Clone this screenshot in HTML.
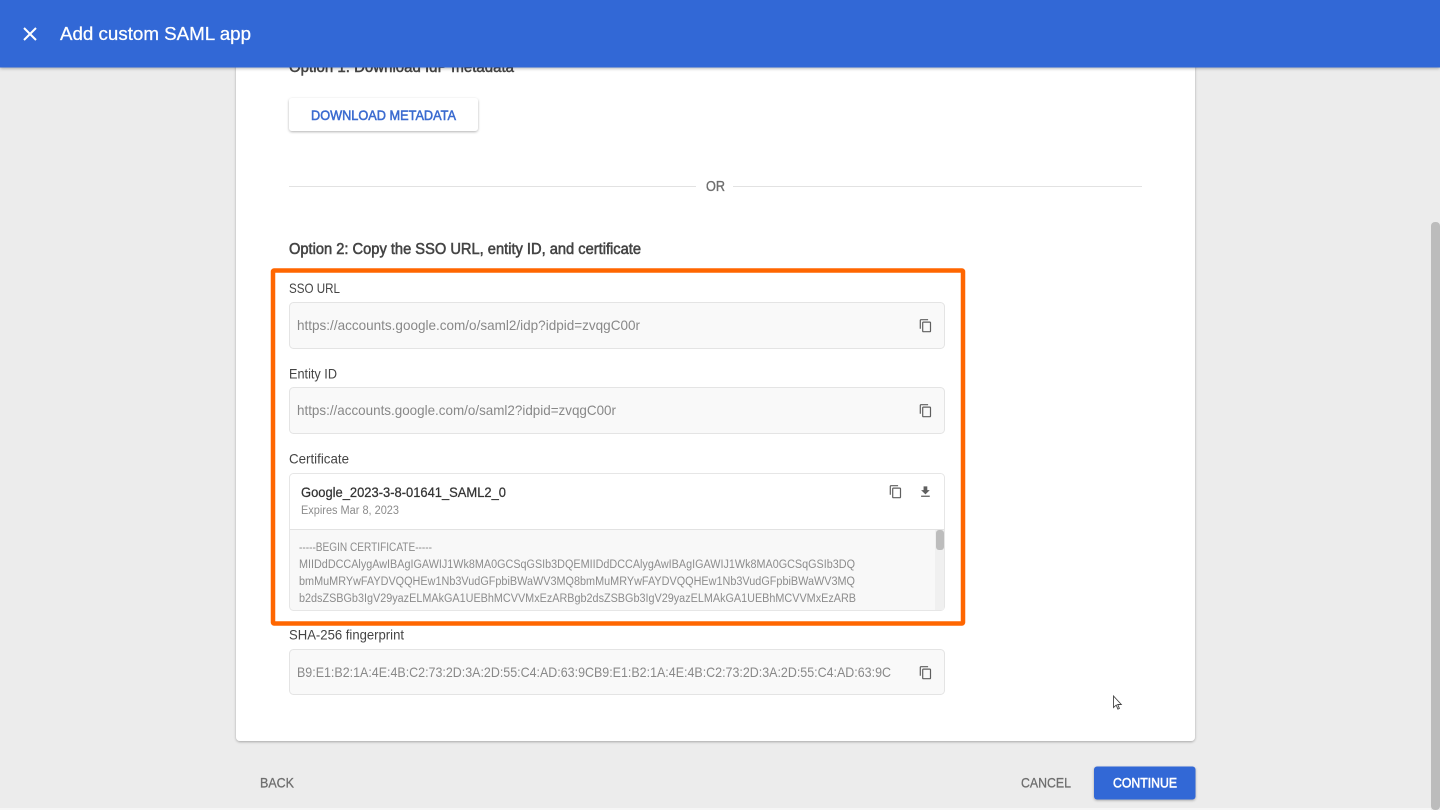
<!DOCTYPE html>
<html>
<head>
<meta charset="utf-8">
<style>
html,body{margin:0;padding:0;width:1440px;height:810px;overflow:hidden;background:#ececec}
svg{display:block;filter:blur(.3px)}
text{font-family:"Liberation Sans",sans-serif}
</style>
</head>
<body>
<svg width="1440" height="810" viewBox="0 0 1440 810" xmlns="http://www.w3.org/2000/svg">
<defs>
<filter id="hs" x="-5%" y="-30%" width="110%" height="170%"><feDropShadow dx="0" dy="1" stdDeviation="1.5" flood-color="#000" flood-opacity=".3"/></filter>
<filter id="bs" x="-10%" y="-20%" width="120%" height="150%"><feDropShadow dx="0" dy="1" stdDeviation="1.2" flood-color="#000" flood-opacity=".3"/></filter>
<path id="copy" d="M16 1H4c-1.1 0-2 .9-2 2v14h2V3h12V1zm3 4H8c-1.1 0-2 .9-2 2v14c0 1.1.9 2 2 2h11c1.1 0 2-.9 2-2V7c0-1.1-.9-2-2-2zm0 16H8V7h11v14z"/>
</defs>
<rect width="1440" height="810" fill="#ececec"/>
<rect x="0" y="808" width="1431" height="2" fill="#f6f6f6"/>
<rect x="1431" y="222" width="9" height="588" rx="4" fill="#bcbcbc"/>

<!-- card -->
<rect x="236" y="40" width="959" height="701" rx="4" fill="#fff" filter="url(#bs)"/>
<text x="289" y="72" font-size="15.500" fill="#444" stroke="#444" stroke-width=".5" textLength="225" lengthAdjust="spacingAndGlyphs">Option 1: Download IdP metadata</text>

<!-- download button -->
<rect x="289" y="98" width="189" height="33" rx="3" fill="#fff" filter="url(#bs)"/>
<text x="311" y="120" font-size="14" fill="#3b6bd0" stroke="#3b6bd0" stroke-width=".55" textLength="145" lengthAdjust="spacingAndGlyphs">DOWNLOAD METADATA</text>

<!-- OR -->
<rect x="289" y="186" width="407" height="1" fill="#e2e2e2"/>
<rect x="733" y="186" width="409" height="1" fill="#e2e2e2"/>
<text x="706" y="191" font-size="14.500" fill="#6e6e6e" stroke="#6e6e6e" stroke-width=".35" textLength="19" lengthAdjust="spacingAndGlyphs">OR</text>

<text x="289" y="254" font-size="15.500" fill="#444" stroke="#444" stroke-width=".55" textLength="352" lengthAdjust="spacingAndGlyphs">Option 2: Copy the SSO URL, entity ID, and certificate</text>

<!-- SSO URL -->
<text x="289" y="293" font-size="14" fill="#444" textLength="51" lengthAdjust="spacingAndGlyphs">SSO URL</text>
<rect x="289.500" y="302.500" width="655" height="46" rx="4" fill="#f9f9f9" stroke="#e4e4e4"/>
<text x="297" y="330" font-size="14" fill="#888" textLength="343" lengthAdjust="spacingAndGlyphs">https://accounts.google.com/o/saml2/idp?idpid=zvqgC00r</text>
<use href="#copy" transform="translate(918.500 318.500) scale(.6)" fill="#5f5f5f"/>

<!-- Entity ID -->
<text x="289" y="378.500" font-size="14" fill="#444" textLength="48" lengthAdjust="spacingAndGlyphs">Entity ID</text>
<rect x="289.500" y="387.500" width="655" height="46" rx="4" fill="#f9f9f9" stroke="#e4e4e4"/>
<text x="297" y="415" font-size="14" fill="#888" textLength="319" lengthAdjust="spacingAndGlyphs">https://accounts.google.com/o/saml2?idpid=zvqgC00r</text>
<use href="#copy" transform="translate(918.500 403.500) scale(.6)" fill="#5f5f5f"/>

<!-- Certificate -->
<text x="289" y="463.500" font-size="14" fill="#444" textLength="60" lengthAdjust="spacingAndGlyphs">Certificate</text>
<rect x="289.500" y="473.500" width="655" height="137" rx="4" fill="#f8f8f8" stroke="#e6e6e6"/>
<path d="M290 529V477.500a3.500 3.500 0 0 1 3.500-3.500H940.500a3.500 3.500 0 0 1 3.500 3.500V529Z" fill="#fff"/>
<rect x="290" y="529" width="654" height="1" fill="#e2e2e2"/>
<text x="301" y="497" font-size="14" fill="#333" stroke="#333" stroke-width=".25" textLength="205" lengthAdjust="spacingAndGlyphs">Google_2023-3-8-01641_SAML2_0</text>
<text x="301" y="514" font-size="11.500" fill="#8c8c8c" textLength="98" lengthAdjust="spacingAndGlyphs">Expires Mar 8, 2023</text>
<use href="#copy" transform="translate(888.500 484.500) scale(.6)" fill="#5f5f5f"/>
<path d="M19 9h-4V3H9v6H5l7 7 7-7zM5 18v2h14v-2H5z" transform="translate(918 484.500) scale(.62)" fill="#5f5f5f"/>

<g font-size="11.500" fill="#8c8c8c">
<text x="299" y="551" textLength="133" lengthAdjust="spacingAndGlyphs">-----BEGIN CERTIFICATE-----</text>
<text x="299" y="568" textLength="556" lengthAdjust="spacingAndGlyphs">MIIDdDCCAlygAwIBAgIGAWIJ1Wk8MA0GCSqGSIb3DQEMIIDdDCCAlygAwIBAgIGAWIJ1Wk8MA0GCSqGSIb3DQ</text>
<text x="299" y="585" textLength="556" lengthAdjust="spacingAndGlyphs">bmMuMRYwFAYDVQQHEw1Nb3VudGFpbiBWaWV3MQ8bmMuMRYwFAYDVQQHEw1Nb3VudGFpbiBWaWV3MQ</text>
<text x="299" y="602" textLength="557" lengthAdjust="spacingAndGlyphs">b2dsZSBGb3IgV29yazELMAkGA1UEBhMCVVMxEzARBgb2dsZSBGb3IgV29yazELMAkGA1UEBhMCVVMxEzARB</text>
</g>
<rect x="935" y="530" width="9" height="80" fill="#f0f0f0"/>
<rect x="936" y="530" width="8" height="20" rx="3" fill="#bdbdbd"/>

<!-- SHA -->
<text x="289" y="639.500" font-size="14" fill="#444" textLength="115" lengthAdjust="spacingAndGlyphs">SHA-256 fingerprint</text>
<rect x="289.500" y="649.500" width="655" height="45" rx="4" fill="#f9f9f9" stroke="#e4e4e4"/>
<text x="297" y="677" font-size="14" fill="#888" textLength="594" lengthAdjust="spacingAndGlyphs">B9:E1:B2:1A:4E:4B:C2:73:2D:3A:2D:55:C4:AD:63:9CB9:E1:B2:1A:4E:4B:C2:73:2D:3A:2D:55:C4:AD:63:9C</text>
<use href="#copy" transform="translate(918.500 665.500) scale(.6)" fill="#5f5f5f"/>

<!-- orange highlight -->
<rect x="273" y="270.500" width="690" height="353" rx="1" fill="none" stroke="#ff6600" stroke-width="4.500"/>

<!-- cursor -->
<path d="M1113.500 696v11.500l2.700-2.400 1.700 4 1.500-.7-1.700-3.900h3.600Z" fill="#fff" stroke="#444" stroke-width=".9"/>

<!-- footer -->
<text x="260" y="787.500" font-size="14" fill="#6e6e6e" stroke="#6e6e6e" stroke-width=".3" textLength="34" lengthAdjust="spacingAndGlyphs">BACK</text>
<text x="1021" y="787.500" font-size="14" fill="#6e6e6e" stroke="#6e6e6e" stroke-width=".3" textLength="50" lengthAdjust="spacingAndGlyphs">CANCEL</text>
<rect x="1094" y="766.500" width="101.500" height="33" rx="3" fill="#3367d6" filter="url(#bs)"/>
<text x="1113" y="787.500" font-size="14" fill="#fff" stroke="#fff" stroke-width=".55" textLength="64" lengthAdjust="spacingAndGlyphs">CONTINUE</text>

<!-- header -->
<rect x="0" y="0" width="1440" height="67.500" fill="#3367d6" filter="url(#hs)"/>
<path d="M24 28L36 40M36 28L24 40" stroke="#fff" stroke-width="2" fill="none"/>
<text x="60" y="40" font-size="18.500" fill="#fff" stroke="#fff" stroke-width=".25" textLength="191" lengthAdjust="spacingAndGlyphs">Add custom SAML app</text>
</svg>
</body>
</html>
